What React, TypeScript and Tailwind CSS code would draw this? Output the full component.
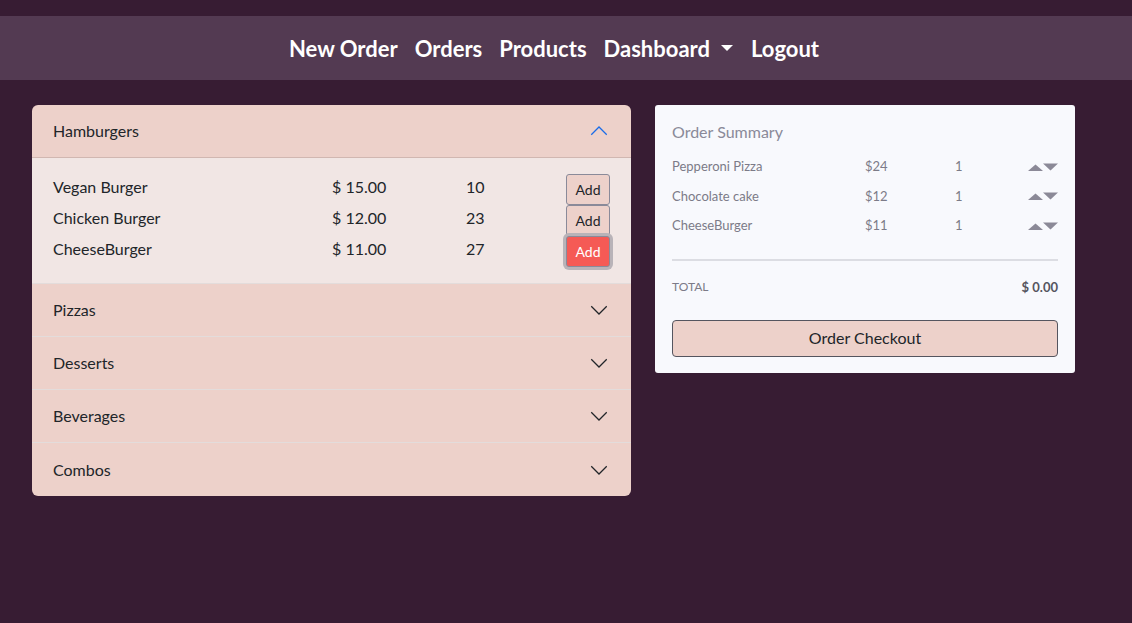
import React from "react";

const font = { fontFamily: 'Lato, "Noto Sans", sans-serif' };

function ChevronUp({ className }: { className?: string }) {
  return (
    <svg className={className} width="20" height="20" viewBox="0 0 16 16" fill="none" stroke="currentColor" strokeWidth="1">
      <path d="M1.8 11 L8 4.8 L14.2 11" />
    </svg>
  );
}
function ChevronDown({ className }: { className?: string }) {
  return (
    <svg className={className} width="20" height="20" viewBox="0 0 16 16" fill="none" stroke="currentColor" strokeWidth="1">
      <path d="M1.8 5 L8 11.2 L14.2 5" />
    </svg>
  );
}

const burgers = [
  { name: "Vegan Burger", price: "$ 15.00", qty: "10" },
  { name: "Chicken Burger", price: "$ 12.00", qty: "23" },
  { name: "CheeseBurger", price: "$ 11.00", qty: "27" },
];

const summary = [
  { name: "Pepperoni Pizza", price: "$24", qty: "1" },
  { name: "Chocolate cake", price: "$12", qty: "1" },
  { name: "CheeseBurger", price: "$11", qty: "1" },
];

function Arrows() {
  return (
    <div className="flex items-end">
      <svg width="15" height="8" viewBox="0 0 15 8"><path d="M0 8 L7.5 1.5 L15 8 Z" fill="#8b8997" /></svg>
      <svg width="15" height="8" viewBox="0 0 15 8"><path d="M0 0.5 L15 0.5 L7.5 7.5 Z" fill="#8b8997" /></svg>
    </div>
  );
}

export default function App() {
  return (
    <div className="min-h-[623px] w-full bg-[#371c33] pt-4" style={font}>
      <nav className="h-16 bg-[#533a52] flex items-center justify-center gap-[17px] pr-6 text-white text-[22px] font-bold">
        <span>New Order</span>
        <span>Orders</span>
        <span>Products</span>
        <span className="flex items-center">
          Dashboard
          <svg className="ml-2.5" width="14" height="8" viewBox="0 0 14 8"><path d="M1 1 L13 1 L7 7 Z" fill="white" /></svg>
        </span>
        <span>Logout</span>
      </nav>

      <div className="flex gap-6 pt-[25px] pl-8">
        <div className="w-[599px] rounded-md overflow-hidden bg-[#edd1ca] text-[#212529] text-base">
          <div className="h-[53px] flex items-center justify-between pl-[21px] pr-[22px] border-b border-[#d1b7b1]">
            <span>Hamburgers</span>
            <ChevronUp className="text-[#1a6ce8]" />
          </div>
          <div className="bg-[#f1e6e4] pl-[21px] pr-[21px] pt-4 pb-4 border-b border-[#e3dcdb]">
            {burgers.map((b, i) => (
              <div key={b.name} className="flex items-start h-[31px]">
                <span className="w-[279px] leading-[26px]">{b.name}</span>
                <span className="w-[134px] leading-[26px]">{b.price}</span>
                <span className="flex-1 leading-[26px]">{b.qty}</span>
                {i === 2 ? (
                  <button className="w-[44px] h-[31px] rounded-[3px] bg-[#f55a55] text-white text-[14px] border border-[#8a8a99] ring-[3px] ring-[#b9b3b8]">Add</button>
                ) : (
                  <button className="w-[44px] h-[31px] rounded-[3px] bg-[#edd1ca] text-[#212529] text-[14px] border border-[#8a8a99]">Add</button>
                )}
              </div>
            ))}
          </div>
          {["Pizzas", "Desserts", "Beverages", "Combos"].map((c, i) => (
            <div key={c} className={`h-[53px] flex items-center justify-between pl-[21px] pr-[22px] ${i < 3 ? "border-b border-[#e3dcdb]" : ""}`}>
              <span>{c}</span>
              <ChevronDown className="text-[#212529]" />
            </div>
          ))}
        </div>

        <div className="w-[420px] h-[268px] bg-[#f8f9fd] rounded-[3px] px-[17px] pt-[15px]">
          <div className="text-[16px] text-[#8a8a99] leading-[24px]">Order Summary</div>
          <div className="mt-[8px] text-[13px] text-[#7c7b88]">
            {summary.map((s) => (
              <div key={s.name} className="flex items-center h-[29.5px]">
                <span className="w-[193px]">{s.name}</span>
                <span className="w-[90px]">{s.price}</span>
                <span className="flex-1">{s.qty}</span>
                <Arrows />
              </div>
            ))}
          </div>
          <div className="mt-[18px] border-t-2 border-[#dcdde3]" />
          <div className="mt-[17px] flex justify-between items-center text-[12px] leading-[18px] text-[#7c7b88]">
            <span>TOTAL</span>
            <span className="font-bold text-[13px] text-[#55555f]">$ 0.00</span>
          </div>
          <button className="mt-[24px] w-full h-[37px] rounded-[4px] bg-[#edd1ca] border border-[#55555f] text-[16px] text-[#212529]">
            Order Checkout
          </button>
        </div>
      </div>
    </div>
  );
}
